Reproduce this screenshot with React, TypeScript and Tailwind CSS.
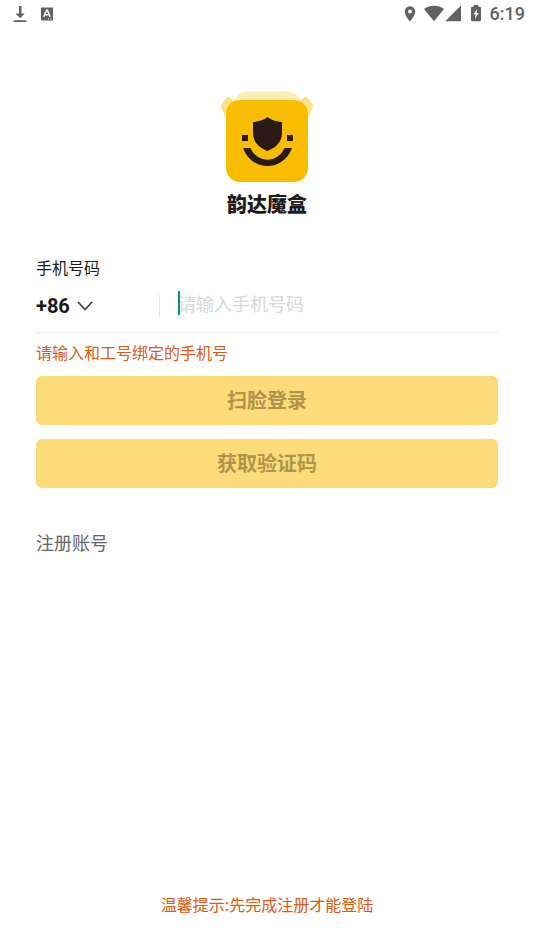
import { useState } from "react";

function StatusBar() {
  return (
    <header className="flex h-7 items-center justify-between pl-3 pr-[9px] text-[#626262]">
      <div className="flex items-center gap-3">
        <svg className="h-[18px] w-4" viewBox="0 0 16 18" fill="currentColor" aria-hidden="true">
          <path d="M7 1h2.5v7.5h3.3L8.2 13.2 3.5 8.5H7zM1.500 15.200h13v1.700h-13z" />
        </svg>
        <svg className="h-[14px] w-[14px]" viewBox="0 0 14 14" aria-hidden="true">
          <rect x="1" y="0.5" width="12" height="13" rx="0.5" fill="currentColor" />
          <path d="M3.8 9.8 6.6 3.2h.8L10.2 9.800M5 7.700h4" fill="none" stroke="#fff" strokeWidth="1.6" />
          <path d="M8 11.8h1M10.2 11.8h1" stroke="#fff" strokeWidth="1" />
        </svg>
      </div>
      <div className="flex items-center">
        <svg className="h-[18px] w-3" viewBox="0 0 12 18" fill="currentColor" aria-hidden="true">
          <path
            fillRule="evenodd"
            d="M6 1.2A5.3 5.3 0 0 0 .7 6.5C.7 10.5 6 16.5 6 16.5s5.3-6 5.3-10A5.3 5.3 0 0 0 6 1.2zm0 3.4a1.9 1.9 0 1 1 0 3.8 1.9 1.9 0 0 1 0-3.8z"
          />
        </svg>
        <svg className="ml-2 h-[18px] w-[38px]" viewBox="0 0 38 18" fill="currentColor" aria-hidden="true">
          <path d="M0 4C5.7-.4 14.3-.4 20 4L10 16.3zM37 .5V16.3H21.3z" />
        </svg>
        <svg className="ml-2 h-[18px] w-3" viewBox="0 0 12 18" aria-hidden="true">
          <path
            d="M3.7 0h4.6v1.700H10a1 1 0 0 1 1 1V15.300a1 1 0 0 1-1 1H2a1 1 0 0 1-1-1V2.700a1 1 0 0 1 1-1h1.700z"
            fill="currentColor"
          />
          <path d="M7.2 4 3.4 9.6h2.1L4.9 14l3.9-5.9H6.6z" fill="#fff" />
        </svg>
        <time className="ml-2 font-[Roboto,sans-serif] text-lg font-medium leading-6">6:19</time>
      </div>
    </header>
  );
}

function Logo() {
  return (
    <svg className="h-[94px] w-24" viewBox="0 0 96 94" role="img" aria-label="韵达魔盒">
      <path d="M14 12 20 4Q22 1.5 26 1.5H70Q74 1.5 77 4L83 12V20H14z" fill="#fcedb8" />
      <path
        d="M11 7Q9 6.5 7.5 8L2.5 14Q1.5 15.5 2 17L6 26 8 28 14 18V10zM85 7Q87 6.5 88.5 8L93.5 14Q94.5 15.5 94 17L90 26 88 28 82 18V10z"
        fill="#fce285"
      />
      <rect x="7" y="10" width="82" height="82" rx="14" fill="#f9bd00" />
      <path
        d="M48.5 27Q54 31.5 63 32V43C63 52 57 57.5 48.5 61 40 57.5 34 52 34 43V32Q43 31.5 48.5 27z"
        fill="#291a17"
      />
      <path d="M23 45h6v6h-6zM68 45h6v6h-6z" fill="#291a17" />
      <path d="M24 58h7.5C38 73.500 59 73.500 65.500 58H73C64 82 33 82 24 58z" fill="#291a17" />
    </svg>
  );
}

export default function App() {
  const [phone, setPhone] = useState("");

  return (
    <div className="flex min-h-screen flex-col bg-white font-['Noto_Sans_CJK_SC',sans-serif] text-[#1a1a1a]">
      <StatusBar />
      <main className="flex flex-1 flex-col px-9 pb-[34px] pt-[62px]">
        <div className="flex flex-col items-center gap-2">
          <Logo />
          <h1 className="text-xl font-black leading-6 text-[#211a18]">韵达魔盒</h1>
        </div>

        <form className="mt-[39px] flex flex-col" onSubmit={(e) => e.preventDefault()}>
          <label htmlFor="phone" className="text-base leading-6">
            手机号码
          </label>
          <div className="flex h-[54px] items-center border-b border-[#ebebeb]">
            <div className="relative flex h-[22px] w-[124px] items-center border-r border-[#e2e2e2]">
              <select
                aria-label="国家代码"
                className="w-full appearance-none bg-transparent font-[Roboto,sans-serif] text-xl font-bold leading-6 outline-none"
              >
                <option>+86</option>
              </select>
              <svg
                className="pointer-events-none absolute left-10 h-[10px] w-[18px]"
                viewBox="0 0 18 10"
                fill="none"
                stroke="#444"
                strokeWidth="1.8"
                aria-hidden="true"
              >
                <path d="M2 1l7 7.5L16 1" />
              </svg>
            </div>
            <div className="relative ml-[18px] flex flex-1 items-center pb-[6px]">
              <input
                id="phone"
                type="tel"
                value={phone}
                onChange={(e) => setPhone(e.target.value)}
                placeholder="请输入手机号码"
                className="w-full bg-transparent text-lg leading-6 caret-[#00897b] outline-none placeholder:text-[#d8d8d8]"
              />
              <span className="absolute left-0 h-6 w-[2px] bg-[#0b8f7c]" aria-hidden="true" />
            </div>
          </div>
          <p className="mt-[7px] text-base leading-6 text-[#e05a12]">请输入和工号绑定的手机号</p>
          <div className="mt-3 flex flex-col gap-[14px]">
            <button type="button" className="h-[49px] rounded-md bg-[#fbdc78] pb-px text-xl font-bold text-[#af954b]">
              扫脸登录
            </button>
            <button type="submit" className="h-[49px] rounded-md bg-[#fbdc78] pb-px text-xl font-bold text-[#af954b]">
              获取验证码
            </button>
          </div>
        </form>

        <a href="#register" className="mt-[42px] self-start text-lg leading-6 text-[#666]">
          注册账号
        </a>
        <p className="mt-auto text-center text-base leading-6 text-[#e05a12]">温馨提示:先完成注册才能登陆</p>
      </main>
    </div>
  );
}
